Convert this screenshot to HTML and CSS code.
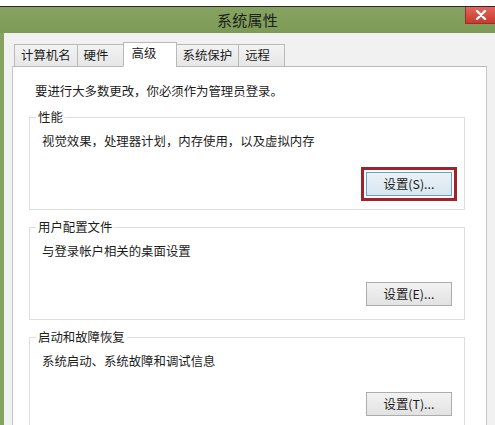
FILE: index.html
```html
<!DOCTYPE html>
<html lang="zh-CN">
<head>
<meta charset="utf-8">
<title>系统属性</title>
<link rel="stylesheet" href="styles.css">
</head>
<body>
<div class="topstrip"></div>
<div class="window">
  <div class="titlebar">
    <span class="spacer"></span>
    <span class="title">系统属性</span>
    <button class="close" aria-label="关闭">
      <svg width="12" height="10" viewBox="0 0 12 10"><path d="M2 1 L10 9 M10 1 L2 9" stroke="#fff" stroke-width="2.4" stroke-linecap="round"/></svg>
    </button>
  </div>
  <div class="frame">
    <div class="tabs">
      <span class="tab">计算机名</span>
      <span class="tab">硬件</span>
      <span class="tab selected">高级</span>
      <span class="tab">系统保护</span>
      <span class="tab">远程</span>
      <span class="tabfill"></span>
    </div>
    <div class="panel">
      <p class="notice">要进行大多数更改，你必须作为管理员登录。</p>
      <fieldset class="group">
        <legend>性能</legend>
        <div class="group-body">
          <p class="desc">视觉效果，处理器计划，内存使用，以及虚拟内存</p>
          <div class="actions"><button class="btn default">设置(S)...</button></div>
        </div>
      </fieldset>
      <fieldset class="group">
        <legend>用户配置文件</legend>
        <div class="group-body">
          <p class="desc">与登录帐户相关的桌面设置</p>
          <div class="actions"><button class="btn">设置(E)...</button></div>
        </div>
      </fieldset>
      <fieldset class="group">
        <legend>启动和故障恢复</legend>
        <div class="group-body">
          <p class="desc">系统启动、系统故障和调试信息</p>
          <div class="actions"><button class="btn">设置(T)...</button></div>
        </div>
      </fieldset>
    </div>
  </div>
</div>
</body>
</html>
```
FILE: styles.css
```css
html, body {
  margin: 0;
  padding: 0;
  height: 425px;
  overflow: hidden;
  background: #ffffff;
}
body {
  font-family: "Noto Sans CJK SC", "Noto Sans", sans-serif;
  font-size: 12.4px;
  line-height: 16px;
  color: #1c1c1c;
}
.topstrip {
  height: 6px;
  background: #ffffff;
}
.window {
  border-top: 1px solid #2a2a2a;
  background: #f1f1f1;
}
.titlebar {
  height: 26px;
  display: grid;
  grid-template-columns: 1fr auto 1fr;
  background: linear-gradient(#86a45f, #7d9a56);
}
.title {
  font-size: 15px;
  line-height: 26px;
  color: #1e1e1e;
  letter-spacing: 0.3px;
}
.close {
  justify-self: end;
  align-self: start;
  width: 30px;
  height: 17px;
  margin: 0;
  padding: 0;
  border: 1px solid #9a3128;
  border-top: none;
  border-right: none;
  background: linear-gradient(#e2675a, #c8392d);
  display: flex;
  align-items: center;
  justify-content: center;
}
.frame {
  border-left: 4px solid #86a35e;
  padding: 9px 8px 0 8px;
  background: #f1f1f1;
}
.tabs {
  display: flex;
  align-items: flex-end;
}
.tabs::before {
  content: "";
  width: 2px;
  height: 1px;
  border-bottom: 1px solid #b9b9b9;
}
.tab {
  box-sizing: border-box;
  height: 23px;
  min-width: 47px;
  padding: 0 6px 0 6px;
  line-height: 21px;
  border: 1px solid #b9b9b9;
  margin-left: -1px;
  background: linear-gradient(#f3f3f3, #e6e6e6);
  white-space: nowrap;
}
.tab:first-child {
  margin-left: 0;
}
.tab.selected {
  height: 25px;
  min-width: 54px;
  padding-left: 8px;
  line-height: 21px;
  background: #ffffff;
  border-bottom-color: #ffffff;
}
.tabfill {
  flex: 1;
  height: 0;
  border-bottom: 1px solid #b9b9b9;
}
.panel {
  background: #ffffff;
  border: 1px solid #c6c6c6;
  border-top: none;
  padding: 16px 21px 20px 16px;
}
.notice {
  margin: 0 0 10px 6px;
}
.group {
  margin: 0 0 9px 0;
  padding: 0;
  border: 1px solid #dedede;
  min-width: 0;
}
.group legend {
  margin-left: 6px;
  padding: 0 2px;
  line-height: 16px;
}
.group-body {
  padding: 8px 12px 13px 12px;
}
.desc {
  margin: 0 0 23px 0;
}
.actions {
  display: flex;
  justify-content: flex-end;
}
.btn {
  width: 86px;
  height: 24px;
  margin: 0;
  padding: 0;
  font-family: "Noto Sans CJK SC", "Noto Sans", sans-serif;
  font-size: 12.4px;
  color: #1c1c1c;
  border: 1px solid #acacac;
  background: linear-gradient(#f2f2f2, #e2e2e2);
}
.btn.default {
  border-color: #6f9fbf;
  background: linear-gradient(#e9f2f8, #d8e6ee);
  outline: 3px solid #a1222b;
  outline-offset: 2px;
}
```
